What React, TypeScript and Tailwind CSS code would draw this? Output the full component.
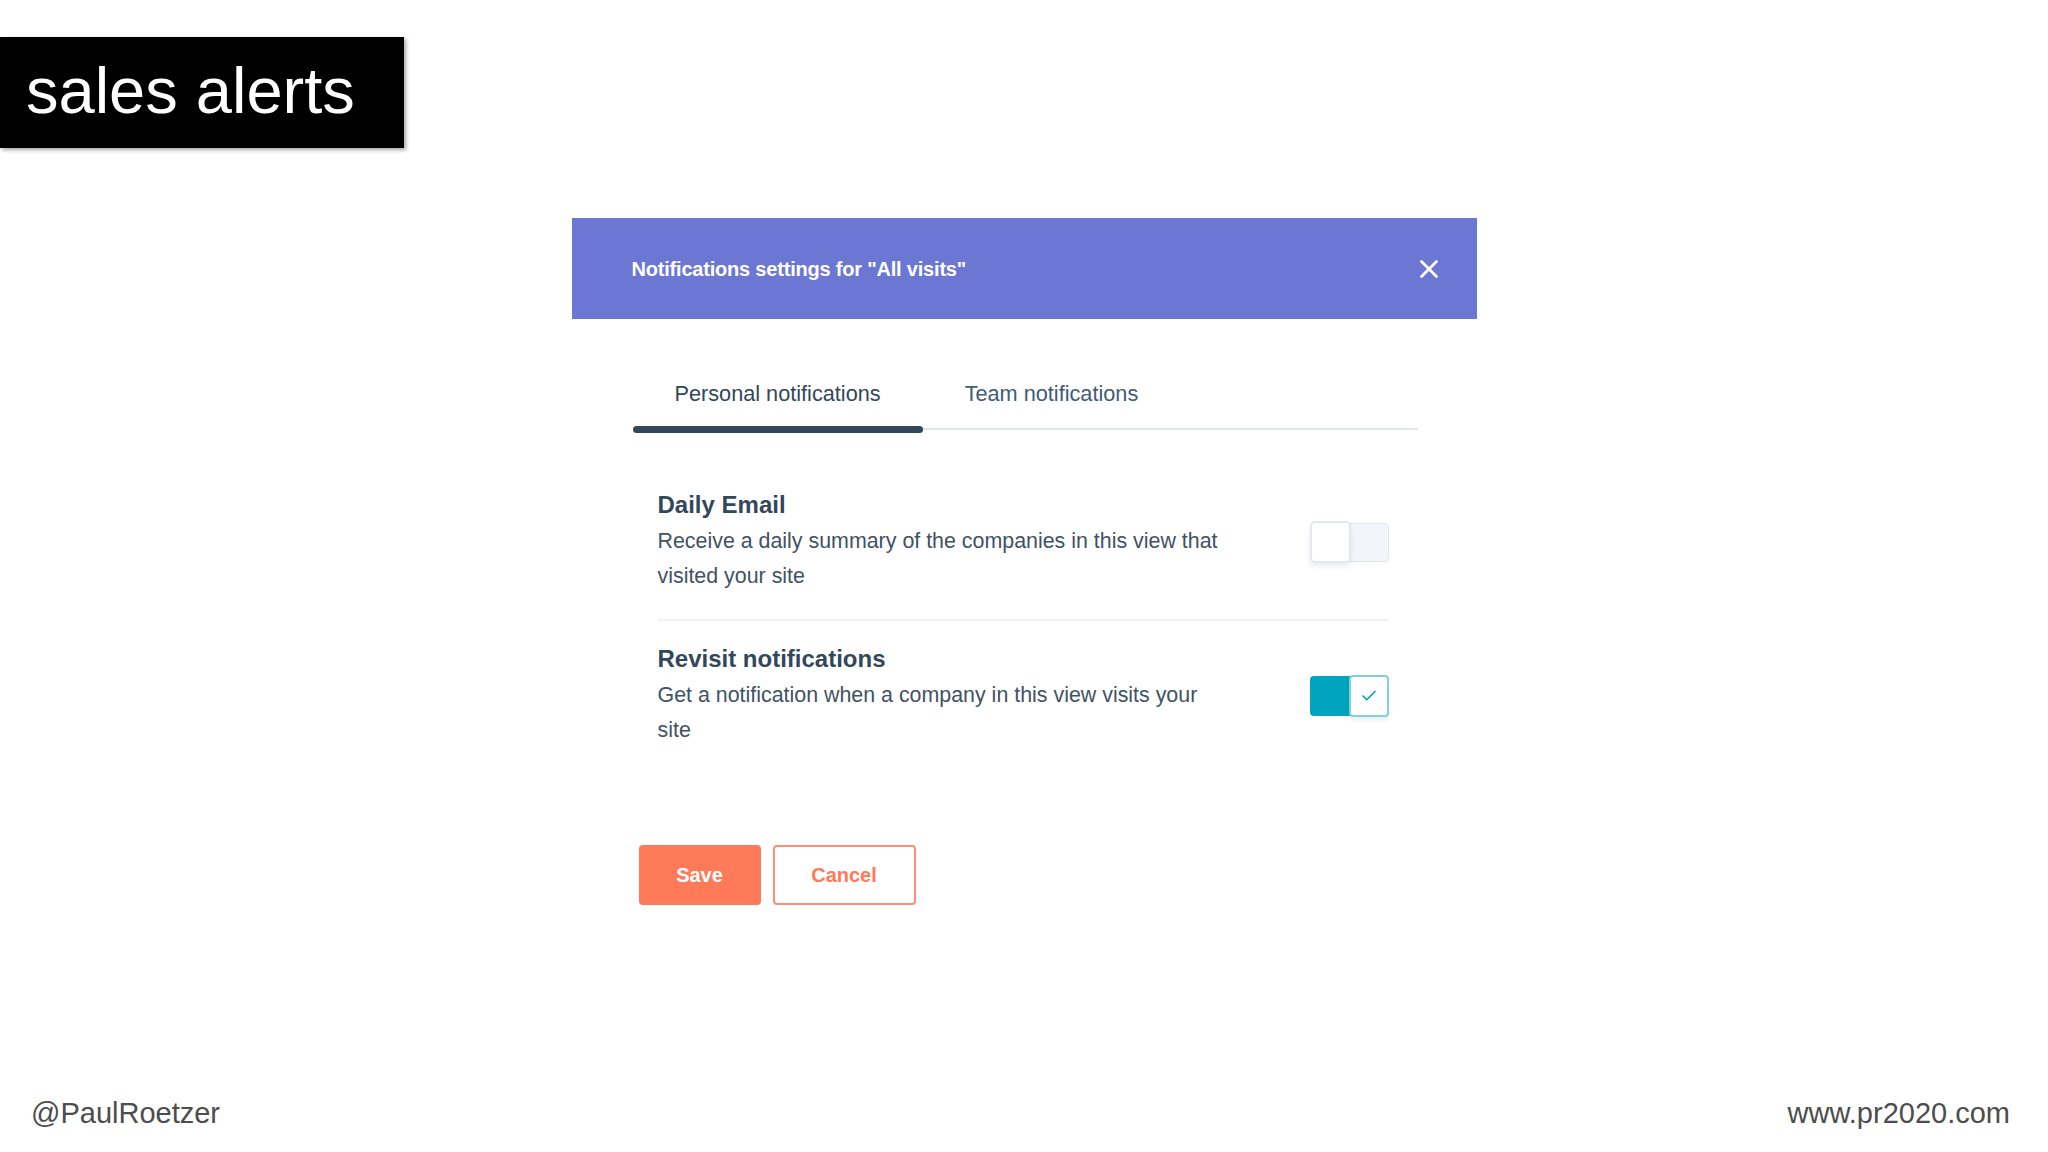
import { X, Check } from 'lucide-react';

interface ToggleProps {
  on: boolean;
}

function Toggle({ on }: ToggleProps) {
  if (on) {
    return (
      <div className="relative w-[79px] h-[42px] shrink-0">
        <div className="absolute left-0 top-[1px] w-[78px] h-[40px] rounded-[4px] bg-[#00a4bd]" />
        <div className="absolute right-0 top-0 w-[40px] h-[42px] rounded-[4px] bg-white border-2 border-[#7fd1de] shadow-[0_3px_5px_rgba(0,0,0,0.08)] flex items-center justify-center">
          <Check size={18} strokeWidth={2.25} className="text-[#00a4bd]" />
        </div>
      </div>
    );
  }
  return (
    <div className="relative w-[79px] h-[42px] shrink-0">
      <div className="absolute right-0 top-[2px] w-[78px] h-[39px] rounded-[4px] bg-[#f2f5f9] border border-[#dfe3eb]" />
      <div className="absolute left-0 top-0 w-[41px] h-[42px] rounded-[5px] bg-white border-2 border-[#e3e7ee] shadow-[0_4px_6px_rgba(0,0,0,0.07)]" />
    </div>
  );
}

interface SettingRowProps {
  title: string;
  lines: string[];
  on: boolean;
}

function SettingRow({ title, lines, on }: SettingRowProps) {
  return (
    <div className="flex items-center justify-between">
      <div>
        <div className="text-[24px] leading-[30px] font-bold text-[#33475b]">{title}</div>
        <div className="mt-[4px] text-[21.4px] leading-[35px] text-[#3f5266]">
          {lines.map((l) => (
            <div key={l}>{l}</div>
          ))}
        </div>
      </div>
      <Toggle on={on} />
    </div>
  );
}

export default function App() {
  return (
    <div
      className="w-[2048px] h-[1152px] bg-white flex flex-col overflow-hidden"
      style={{ fontFamily: '"Liberation Sans", Arial, sans-serif' }}
    >
      <div className="mt-[37px] w-[404px] h-[111px] bg-black shadow-[2px_2px_4px_rgba(0,0,0,0.35)] flex items-center pl-[26px]">
        <span className="text-white text-[65px] leading-none pb-[4px]">sales alerts</span>
      </div>

      <div className="mt-[70px] mx-auto w-[905px]">
        <div className="h-[101px] bg-[#6b77d2] flex items-center justify-between pl-[60px] pr-[33px]">
          <span className="text-white text-[20px] font-bold tracking-[-0.2px]">
            Notifications settings for "All visits"
          </span>
          <X size={30} strokeWidth={2.2} className="text-white" />
        </div>

        <div className="pl-[61px] pr-[59px]">
          <div className="mt-[63px] flex border-b-2 border-[#dfe3eb]">
            <div className="relative px-[42px] pb-[22px] text-[21.7px] leading-[24px] text-[#33475b]">
              Personal notifications
              <div className="absolute left-0 right-0 -bottom-[5px] h-[7px] rounded-full bg-[#33475b]" />
            </div>
            <div className="px-[42px] pb-[22px] text-[21.7px] leading-[24px] text-[#425b76]">
              Team notifications
            </div>
          </div>

          <div className="mt-[60px] pl-[25px] pr-[29px]">
            <SettingRow
              title="Daily Email"
              lines={['Receive a daily summary of the companies in this view that', 'visited your site']}
              on={false}
            />
            <div className="mt-[25px] mb-[23px] h-[2px] bg-[#eef1f5]" />
            <SettingRow
              title="Revisit notifications"
              lines={['Get a notification when a company in this view visits your', 'site']}
              on={true}
            />
          </div>

          <div className="mt-[97px] ml-[6px] flex gap-[12px]">
            <button className="w-[122px] h-[60px] rounded-[4px] bg-[#ff7a59] text-white text-[20px] font-bold">
              Save
            </button>
            <button className="w-[143px] h-[60px] rounded-[4px] border-2 border-[#ff8f73] bg-white text-[#ff7a59] text-[20px] font-bold">
              Cancel
            </button>
          </div>
        </div>
      </div>

      <div className="mt-auto flex justify-between pl-[31px] pr-[38px] pb-[21px] text-[29px] leading-[36px] text-[#4d4d4d]">
        <span>@PaulRoetzer</span>
        <span>www.pr2020.com</span>
      </div>
    </div>
  );
}
